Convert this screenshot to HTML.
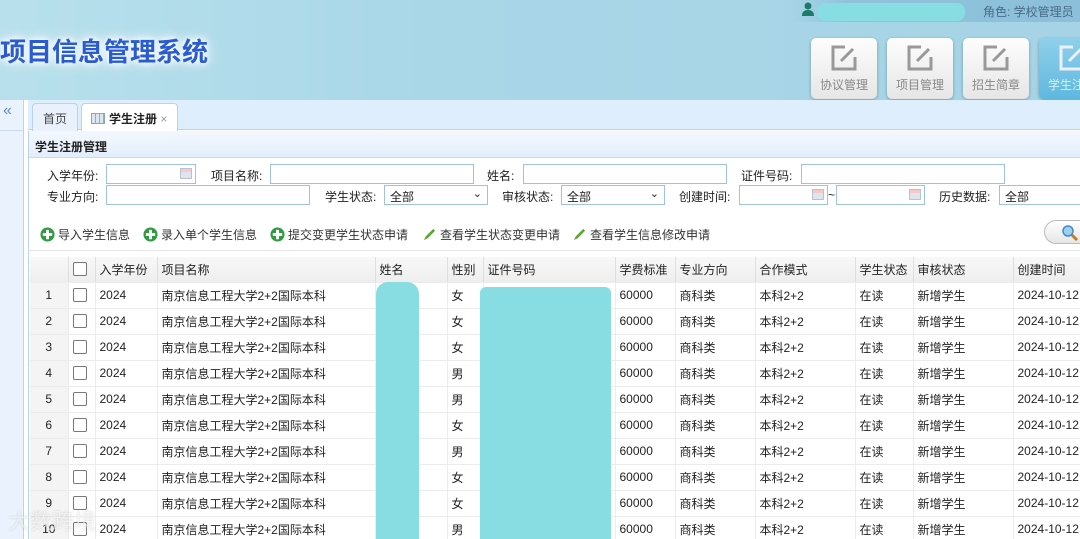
<!DOCTYPE html>
<html><head><meta charset="utf-8">
<style>
*{margin:0;padding:0;box-sizing:border-box}
html,body{width:1080px;height:539px;overflow:hidden}
body{position:relative;font-family:"Liberation Sans","Noto Sans CJK SC",sans-serif;font-size:12px;color:#222;background:#fff}
.a{position:absolute}
.hdr{left:0;top:0;width:1080px;height:100px;background:linear-gradient(90deg,#b8e0ec 0%,#a9d7e8 40%,#a6d4e6 100%)}
.title{left:0;top:32px;font-size:26px;font-weight:bold;color:#2a5bd0;letter-spacing:0;text-shadow:0 0 6px #fff,0 0 10px #fff,0 0 14px #e8f4ff;font-family:"Noto Sans CJK SC",sans-serif}
.topbar{left:790px;top:0;width:290px;height:22px;background:linear-gradient(90deg,rgba(166,212,230,0),#8fc3dc 20%,#8cc0da)}
.btn{top:38px;width:66px;height:61px;border-radius:5px;background:linear-gradient(#fdfdfd,#e6e6e6);box-shadow:0 1px 3px rgba(0,0,0,.3);text-align:center;color:#888;font-size:12px}
.btn svg{display:block;margin:6px auto 4px}
.tabbar{left:28px;top:100px;width:1052px;height:30px;background:#dfeefc;border-bottom:1px solid #b9d3ea}
.side{left:0;top:100px;width:24px;height:439px;background:#eaf3fd;border-right:1px solid #b9d3ea}
.tab{top:103px;height:28px;border:1px solid #b9d3ea;border-bottom:none;border-radius:4px 4px 0 0;background:#e9f2fc;padding:6px 10px;font-size:12px}
.ptitle{left:28px;top:131px;width:1052px;height:27px;background:linear-gradient(#f3f8fe,#e3eefb);border-bottom:1px solid #c9dbee;border-left:1px solid #b9d3ea;font-weight:bold;padding:7px 6px;font-size:12px}
.body{left:28px;top:158px;width:1052px;height:381px;border-left:1px solid #b9d3ea;background:#fff}
.lbl{font-size:12px;color:#222}
.inp{height:20px;border:1px solid #9fc4d9;background:#fff;font-size:12px;padding:2px 5px}
.cal{position:absolute;right:3px;top:3px;width:12px;height:11px;background:linear-gradient(#f6c8c8 0 3px,#dfe4ee 3px);border:1px solid #b8c2d2}
.tb{top:226px;font-size:12px;color:#333}
.plus{display:inline-block;width:15px;height:15px;vertical-align:-3px;margin-right:3px}
table{position:absolute;left:30px;top:257px;border-collapse:collapse;font-size:12px;table-layout:fixed;width:1063px}
td{height:26px;border-bottom:1px solid #ececec;border-right:1px solid #ececec;padding:0 4px;white-space:nowrap;overflow:hidden;box-sizing:border-box}
tr.h td{background:linear-gradient(#f8f8f8,#eeeeee);height:25px;border-right:1px solid #dedede}
td.n{background:#f4f4f4;text-align:center}
.cb{display:inline-block;width:14px;height:14px;border:1px solid #777;border-radius:2px;background:#fff;vertical-align:-3px}
.blob{background:#88dde3}
</style></head><body>
<div class="a hdr"></div>
<div class="a topbar"></div>
<svg class="a" style="left:802px;top:2px" width="12" height="14"><circle cx="6" cy="4" r="3.5" fill="#1c7a6a"/><path d="M0 14 Q0 8 6 8 Q12 8 12 14Z" fill="#1c7a6a"/></svg>
<div class="a blob" style="left:817px;top:3px;width:148px;height:18px;border-radius:8px"></div>
<div class="a" style="left:983px;top:3px;color:#4a6a86;font-size:12px">角色: 学校管理员</div>
<div class="a title">项目信息管理系统</div>
<div class="a btn" style="left:811px"><svg width="28" height="28" viewBox="0 0 28 28"><path d="M15 3H3v22h22V13" fill="none" stroke="#999" stroke-width="3"/><path d="M11 17L23 5" stroke="#999" stroke-width="3"/></svg>协议管理</div>
<div class="a btn" style="left:887px"><svg width="28" height="28" viewBox="0 0 28 28"><path d="M15 3H3v22h22V13" fill="none" stroke="#999" stroke-width="3"/><path d="M11 17L23 5" stroke="#999" stroke-width="3"/></svg>项目管理</div>
<div class="a btn" style="left:963px"><svg width="28" height="28" viewBox="0 0 28 28"><path d="M15 3H3v22h22V13" fill="none" stroke="#999" stroke-width="3"/><path d="M11 17L23 5" stroke="#999" stroke-width="3"/></svg>招生简章</div>
<div class="a btn" style="left:1039px;background:linear-gradient(#8fd0ea,#5fb8df);color:#d8f0fa"><svg width="28" height="28" viewBox="0 0 28 28"><path d="M15 3H3v22h22V13" fill="none" stroke="#eef" stroke-width="3"/><path d="M11 17L23 5" stroke="#eef" stroke-width="3"/></svg>学生注册</div>

<div class="a side"><div style="color:#5b8fc7;font-size:16px;padding:2px 0 0 3px">«</div><div style="position:absolute;top:30px;left:0;width:23px;border-top:1px solid #c9dbee"></div></div>
<div class="a tabbar"></div>
<div class="a tab" style="left:32px;color:#444">首页</div>
<div class="a tab" style="left:81px;background:#fff;font-weight:bold;height:28px;padding-left:9px"><span style="display:inline-block;width:14px;height:11px;border:1px solid #8aa;background:repeating-linear-gradient(90deg,#dde6ee 0 3px,#9ab 3px 4px);vertical-align:-1px;margin-right:4px"></span>学生注册 <span style="color:#999;font-weight:normal">×</span></div>
<div class="a ptitle">学生注册管理</div>
<div class="a body"></div>

<div class="a lbl" style="left:47px;top:167px">入学年份:</div>
<div class="a inp" style="left:106px;top:164px;width:90px"><span class="cal"></span></div>
<div class="a lbl" style="left:211px;top:167px">项目名称:</div>
<div class="a inp" style="left:270px;top:164px;width:204px"></div>
<div class="a lbl" style="left:487px;top:167px">姓名:</div>
<div class="a inp" style="left:523px;top:164px;width:204px"></div>
<div class="a lbl" style="left:741px;top:167px">证件号码:</div>
<div class="a inp" style="left:801px;top:164px;width:204px"></div>

<div class="a lbl" style="left:47px;top:188px">专业方向:</div>
<div class="a inp" style="left:106px;top:185px;width:204px"></div>
<div class="a lbl" style="left:325px;top:188px">学生状态:</div>
<div class="a inp" style="left:384px;top:185px;width:104px">全部<span style="position:absolute;right:5px;top:1px;font-size:11px">⌄</span></div>
<div class="a lbl" style="left:502px;top:188px">审核状态:</div>
<div class="a inp" style="left:561px;top:185px;width:104px">全部<span style="position:absolute;right:5px;top:1px;font-size:11px">⌄</span></div>
<div class="a lbl" style="left:679px;top:188px">创建时间:</div>
<div class="a inp" style="left:739px;top:185px;width:89px"><span class="cal"></span></div>
<div class="a lbl" style="left:828px;top:188px">~</div>
<div class="a inp" style="left:836px;top:185px;width:89px"><span class="cal"></span></div>
<div class="a lbl" style="left:939px;top:188px">历史数据:</div>
<div class="a inp" style="left:999px;top:185px;width:90px">全部</div>

<div class="a tb" style="left:40px"><svg class="plus" viewBox="0 0 16 16"><circle cx="8" cy="8" r="7.5" fill="#2e9b3e"/><path d="M8 3v10M3 8h10" stroke="#fff" stroke-width="3.2"/></svg>导入学生信息</div>
<div class="a tb" style="left:143px"><svg class="plus" viewBox="0 0 16 16"><circle cx="8" cy="8" r="7.5" fill="#2e9b3e"/><path d="M8 3v10M3 8h10" stroke="#fff" stroke-width="3.2"/></svg>录入单个学生信息</div>
<div class="a tb" style="left:270px"><svg class="plus" viewBox="0 0 16 16"><circle cx="8" cy="8" r="7.5" fill="#2e9b3e"/><path d="M8 3v10M3 8h10" stroke="#fff" stroke-width="3.2"/></svg>提交变更学生状态申请</div>
<div class="a tb" style="left:422px"><svg class="plus" viewBox="0 0 16 16"><path d="M2 14L4 10 12 2 14 4 6 12Z" fill="#5aa830"/></svg>查看学生状态变更申请</div>
<div class="a tb" style="left:572px"><svg class="plus" viewBox="0 0 16 16"><path d="M2 14L4 10 12 2 14 4 6 12Z" fill="#5aa830"/></svg>查看学生信息修改申请</div>
<div class="a" style="left:1044px;top:220px;width:60px;height:24px;border:1px solid #bbb;border-radius:12px;background:linear-gradient(#fff,#e6e6e6)"><svg style="position:absolute;left:16px;top:3px" width="18" height="18"><circle cx="7" cy="7" r="5" fill="#9cd0f0" stroke="#4a8ac0" stroke-width="1.5"/><path d="M11 11l5 5" stroke="#c08020" stroke-width="3"/></svg></div>
<div class="a" style="left:28px;top:250px;width:1052px;border-top:1px solid #e4e4e4"></div>

<table>
<colgroup><col style="width:38px"><col style="width:27px"><col style="width:62px"><col style="width:218px"><col style="width:72px"><col style="width:36px"><col style="width:132px"><col style="width:60px"><col style="width:80px"><col style="width:100px"><col style="width:58px"><col style="width:100px"><col style="width:80px"></colgroup>
<tr class="h"><td class="n"></td><td><span class="cb"></span></td><td>入学年份</td><td>项目名称</td><td>姓名</td><td>性别</td><td>证件号码</td><td>学费标准</td><td>专业方向</td><td>合作模式</td><td>学生状态</td><td>审核状态</td><td>创建时间</td></tr>
<tr><td class="n">1</td><td><span class="cb"></span></td><td>2024</td><td>南京信息工程大学2+2国际本科</td><td></td><td>女</td><td></td><td>60000</td><td>商科类</td><td>本科2+2</td><td>在读</td><td>新增学生</td><td>2024-10-12</td></tr>
<tr><td class="n">2</td><td><span class="cb"></span></td><td>2024</td><td>南京信息工程大学2+2国际本科</td><td></td><td>女</td><td></td><td>60000</td><td>商科类</td><td>本科2+2</td><td>在读</td><td>新增学生</td><td>2024-10-12</td></tr>
<tr><td class="n">3</td><td><span class="cb"></span></td><td>2024</td><td>南京信息工程大学2+2国际本科</td><td></td><td>女</td><td></td><td>60000</td><td>商科类</td><td>本科2+2</td><td>在读</td><td>新增学生</td><td>2024-10-12</td></tr>
<tr><td class="n">4</td><td><span class="cb"></span></td><td>2024</td><td>南京信息工程大学2+2国际本科</td><td></td><td>男</td><td></td><td>60000</td><td>商科类</td><td>本科2+2</td><td>在读</td><td>新增学生</td><td>2024-10-12</td></tr>
<tr><td class="n">5</td><td><span class="cb"></span></td><td>2024</td><td>南京信息工程大学2+2国际本科</td><td></td><td>男</td><td></td><td>60000</td><td>商科类</td><td>本科2+2</td><td>在读</td><td>新增学生</td><td>2024-10-12</td></tr>
<tr><td class="n">6</td><td><span class="cb"></span></td><td>2024</td><td>南京信息工程大学2+2国际本科</td><td></td><td>女</td><td></td><td>60000</td><td>商科类</td><td>本科2+2</td><td>在读</td><td>新增学生</td><td>2024-10-12</td></tr>
<tr><td class="n">7</td><td><span class="cb"></span></td><td>2024</td><td>南京信息工程大学2+2国际本科</td><td></td><td>男</td><td></td><td>60000</td><td>商科类</td><td>本科2+2</td><td>在读</td><td>新增学生</td><td>2024-10-12</td></tr>
<tr><td class="n">8</td><td><span class="cb"></span></td><td>2024</td><td>南京信息工程大学2+2国际本科</td><td></td><td>女</td><td></td><td>60000</td><td>商科类</td><td>本科2+2</td><td>在读</td><td>新增学生</td><td>2024-10-12</td></tr>
<tr><td class="n">9</td><td><span class="cb"></span></td><td>2024</td><td>南京信息工程大学2+2国际本科</td><td></td><td>女</td><td></td><td>60000</td><td>商科类</td><td>本科2+2</td><td>在读</td><td>新增学生</td><td>2024-10-12</td></tr>
<tr><td class="n">10</td><td><span class="cb"></span></td><td>2024</td><td>南京信息工程大学2+2国际本科</td><td></td><td>男</td><td></td><td>60000</td><td>商科类</td><td>本科2+2</td><td>在读</td><td>新增学生</td><td>2024-10-12</td></tr>
</table>
<div class="a blob" style="left:376px;top:282px;width:43px;height:270px;border-radius:12px"></div>
<div class="a blob" style="left:480px;top:287px;width:131px;height:270px;border-radius:6px"></div>
<div class="a" style="left:8px;top:504px;font-size:22px;color:rgba(255,255,255,.55);font-family:'Noto Sans CJK SC',sans-serif;text-shadow:0 0 2px rgba(0,0,0,.15)">大数跨境</div>
</body></html>
